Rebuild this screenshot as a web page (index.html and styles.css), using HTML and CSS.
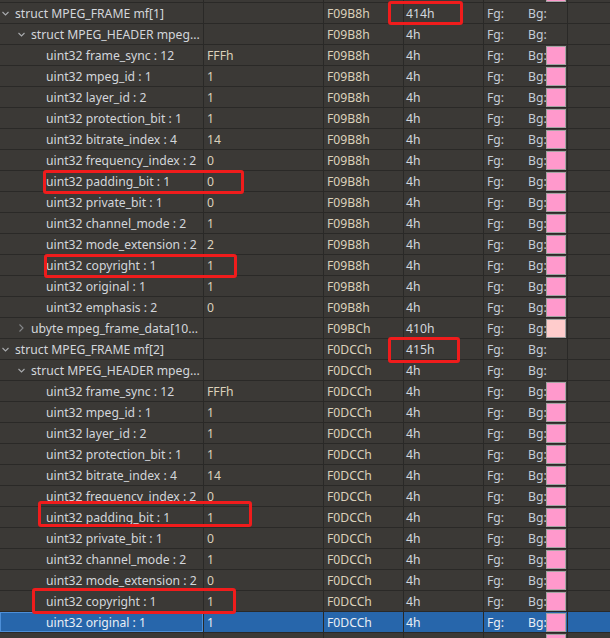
FILE: index.html
```html
<!DOCTYPE html>
<html>
<head>
<meta charset="utf-8">
<link rel="stylesheet" href="styles.css">
</head>
<body>
<div class="view">
  <div class="table">
    <div class="r"><div class="c n l2"><span class="tw"></span></div><div class="c v"></div><div class="c s"></div><div class="c z"></div><div class="c col"><span class="fg"></span><span class="bg"></span><span class="sw pk"></span></div><div class="c e"></div></div>

    <div class="r"><div class="c n l0"><span class="tw"><svg width="9" height="20" viewBox="0 0 9 20"><polyline points="1.5,9 4.5,12 7.5,9" /></svg></span>struct MPEG_FRAME mf[1]</div><div class="c v"></div><div class="c s">F09B8h</div><div class="c z">414h</div><div class="c col"><span class="fg">Fg:</span><span class="bg">Bg:</span></div><div class="c e"></div></div>
    <div class="r"><div class="c n l1"><span class="tw"><svg width="9" height="20" viewBox="0 0 9 20"><polyline points="1.5,9 4.5,12 7.5,9" /></svg></span>struct MPEG_HEADER mpeg...</div><div class="c v"></div><div class="c s">F09B8h</div><div class="c z">4h</div><div class="c col"><span class="fg">Fg:</span><span class="bg">Bg:</span></div><div class="c e"></div></div>
    <div class="r"><div class="c n l2"><span class="tw"></span>uint32 frame_sync : 12</div><div class="c v">FFFh</div><div class="c s">F09B8h</div><div class="c z">4h</div><div class="c col"><span class="fg">Fg:</span><span class="bg">Bg:</span><span class="sw pk"></span></div><div class="c e"></div></div>
    <div class="r"><div class="c n l2"><span class="tw"></span>uint32 mpeg_id : 1</div><div class="c v">1</div><div class="c s">F09B8h</div><div class="c z">4h</div><div class="c col"><span class="fg">Fg:</span><span class="bg">Bg:</span><span class="sw pk"></span></div><div class="c e"></div></div>
    <div class="r"><div class="c n l2"><span class="tw"></span>uint32 layer_id : 2</div><div class="c v">1</div><div class="c s">F09B8h</div><div class="c z">4h</div><div class="c col"><span class="fg">Fg:</span><span class="bg">Bg:</span><span class="sw pk"></span></div><div class="c e"></div></div>
    <div class="r"><div class="c n l2"><span class="tw"></span>uint32 protection_bit : 1</div><div class="c v">1</div><div class="c s">F09B8h</div><div class="c z">4h</div><div class="c col"><span class="fg">Fg:</span><span class="bg">Bg:</span><span class="sw pk"></span></div><div class="c e"></div></div>
    <div class="r"><div class="c n l2"><span class="tw"></span>uint32 bitrate_index : 4</div><div class="c v">14</div><div class="c s">F09B8h</div><div class="c z">4h</div><div class="c col"><span class="fg">Fg:</span><span class="bg">Bg:</span><span class="sw pk"></span></div><div class="c e"></div></div>
    <div class="r"><div class="c n l2"><span class="tw"></span>uint32 frequency_index : 2</div><div class="c v">0</div><div class="c s">F09B8h</div><div class="c z">4h</div><div class="c col"><span class="fg">Fg:</span><span class="bg">Bg:</span><span class="sw pk"></span></div><div class="c e"></div></div>
    <div class="r"><div class="c n l2"><span class="tw"></span>uint32 padding_bit : 1</div><div class="c v">0</div><div class="c s">F09B8h</div><div class="c z">4h</div><div class="c col"><span class="fg">Fg:</span><span class="bg">Bg:</span><span class="sw pk"></span></div><div class="c e"></div></div>
    <div class="r"><div class="c n l2"><span class="tw"></span>uint32 private_bit : 1</div><div class="c v">0</div><div class="c s">F09B8h</div><div class="c z">4h</div><div class="c col"><span class="fg">Fg:</span><span class="bg">Bg:</span><span class="sw pk"></span></div><div class="c e"></div></div>
    <div class="r"><div class="c n l2"><span class="tw"></span>uint32 channel_mode : 2</div><div class="c v">1</div><div class="c s">F09B8h</div><div class="c z">4h</div><div class="c col"><span class="fg">Fg:</span><span class="bg">Bg:</span><span class="sw pk"></span></div><div class="c e"></div></div>
    <div class="r"><div class="c n l2"><span class="tw"></span>uint32 mode_extension : 2</div><div class="c v">2</div><div class="c s">F09B8h</div><div class="c z">4h</div><div class="c col"><span class="fg">Fg:</span><span class="bg">Bg:</span><span class="sw pk"></span></div><div class="c e"></div></div>
    <div class="r"><div class="c n l2"><span class="tw"></span>uint32 copyright : 1</div><div class="c v">1</div><div class="c s">F09B8h</div><div class="c z">4h</div><div class="c col"><span class="fg">Fg:</span><span class="bg">Bg:</span><span class="sw pk"></span></div><div class="c e"></div></div>
    <div class="r"><div class="c n l2"><span class="tw"></span>uint32 original : 1</div><div class="c v">1</div><div class="c s">F09B8h</div><div class="c z">4h</div><div class="c col"><span class="fg">Fg:</span><span class="bg">Bg:</span><span class="sw pk"></span></div><div class="c e"></div></div>
    <div class="r"><div class="c n l2"><span class="tw"></span>uint32 emphasis : 2</div><div class="c v">0</div><div class="c s">F09B8h</div><div class="c z">4h</div><div class="c col"><span class="fg">Fg:</span><span class="bg">Bg:</span><span class="sw pk"></span></div><div class="c e"></div></div>
    <div class="r"><div class="c n l1"><span class="tw"><svg width="9" height="20" viewBox="0 0 9 20"><polyline class="dim" points="2.5,6.5 6,10 2.5,13.5" /></svg></span>ubyte mpeg_frame_data[10...</div><div class="c v"></div><div class="c s">F09BCh</div><div class="c z">410h</div><div class="c col"><span class="fg">Fg:</span><span class="bg">Bg:</span><span class="sw lt"></span></div><div class="c e"></div></div>

    <div class="r"><div class="c n l0"><span class="tw"><svg width="9" height="20" viewBox="0 0 9 20"><polyline points="1.5,9 4.5,12 7.5,9" /></svg></span>struct MPEG_FRAME mf[2]</div><div class="c v"></div><div class="c s">F0DCCh</div><div class="c z">415h</div><div class="c col"><span class="fg">Fg:</span><span class="bg">Bg:</span></div><div class="c e"></div></div>
    <div class="r"><div class="c n l1"><span class="tw"><svg width="9" height="20" viewBox="0 0 9 20"><polyline points="1.5,9 4.5,12 7.5,9" /></svg></span>struct MPEG_HEADER mpeg...</div><div class="c v"></div><div class="c s">F0DCCh</div><div class="c z">4h</div><div class="c col"><span class="fg">Fg:</span><span class="bg">Bg:</span></div><div class="c e"></div></div>
    <div class="r"><div class="c n l2"><span class="tw"></span>uint32 frame_sync : 12</div><div class="c v">FFFh</div><div class="c s">F0DCCh</div><div class="c z">4h</div><div class="c col"><span class="fg">Fg:</span><span class="bg">Bg:</span><span class="sw pk"></span></div><div class="c e"></div></div>
    <div class="r"><div class="c n l2"><span class="tw"></span>uint32 mpeg_id : 1</div><div class="c v">1</div><div class="c s">F0DCCh</div><div class="c z">4h</div><div class="c col"><span class="fg">Fg:</span><span class="bg">Bg:</span><span class="sw pk"></span></div><div class="c e"></div></div>
    <div class="r"><div class="c n l2"><span class="tw"></span>uint32 layer_id : 2</div><div class="c v">1</div><div class="c s">F0DCCh</div><div class="c z">4h</div><div class="c col"><span class="fg">Fg:</span><span class="bg">Bg:</span><span class="sw pk"></span></div><div class="c e"></div></div>
    <div class="r"><div class="c n l2"><span class="tw"></span>uint32 protection_bit : 1</div><div class="c v">1</div><div class="c s">F0DCCh</div><div class="c z">4h</div><div class="c col"><span class="fg">Fg:</span><span class="bg">Bg:</span><span class="sw pk"></span></div><div class="c e"></div></div>
    <div class="r"><div class="c n l2"><span class="tw"></span>uint32 bitrate_index : 4</div><div class="c v">14</div><div class="c s">F0DCCh</div><div class="c z">4h</div><div class="c col"><span class="fg">Fg:</span><span class="bg">Bg:</span><span class="sw pk"></span></div><div class="c e"></div></div>
    <div class="r"><div class="c n l2"><span class="tw"></span>uint32 frequency_index : 2</div><div class="c v">0</div><div class="c s">F0DCCh</div><div class="c z">4h</div><div class="c col"><span class="fg">Fg:</span><span class="bg">Bg:</span><span class="sw pk"></span></div><div class="c e"></div></div>
    <div class="r"><div class="c n l2"><span class="tw"></span>uint32 padding_bit : 1</div><div class="c v">1</div><div class="c s">F0DCCh</div><div class="c z">4h</div><div class="c col"><span class="fg">Fg:</span><span class="bg">Bg:</span><span class="sw pk"></span></div><div class="c e"></div></div>
    <div class="r"><div class="c n l2"><span class="tw"></span>uint32 private_bit : 1</div><div class="c v">0</div><div class="c s">F0DCCh</div><div class="c z">4h</div><div class="c col"><span class="fg">Fg:</span><span class="bg">Bg:</span><span class="sw pk"></span></div><div class="c e"></div></div>
    <div class="r"><div class="c n l2"><span class="tw"></span>uint32 channel_mode : 2</div><div class="c v">1</div><div class="c s">F0DCCh</div><div class="c z">4h</div><div class="c col"><span class="fg">Fg:</span><span class="bg">Bg:</span><span class="sw pk"></span></div><div class="c e"></div></div>
    <div class="r"><div class="c n l2"><span class="tw"></span>uint32 mode_extension : 2</div><div class="c v">0</div><div class="c s">F0DCCh</div><div class="c z">4h</div><div class="c col"><span class="fg">Fg:</span><span class="bg">Bg:</span><span class="sw pk"></span></div><div class="c e"></div></div>
    <div class="r"><div class="c n l2"><span class="tw"></span>uint32 copyright : 1</div><div class="c v">1</div><div class="c s">F0DCCh</div><div class="c z">4h</div><div class="c col"><span class="fg">Fg:</span><span class="bg">Bg:</span><span class="sw pk"></span></div><div class="c e"></div></div>
    <div class="r sel"><div class="c n l2"><span class="tw"></span>uint32 original : 1</div><div class="c v">1</div><div class="c s">F0DCCh</div><div class="c z">4h</div><div class="c col"><span class="fg">Fg:</span><span class="bg">Bg:</span><span class="sw pk"></span></div><div class="c e"></div></div>
    <div class="r"><div class="c n l2"><span class="tw"></span></div><div class="c v"></div><div class="c s"></div><div class="c z"></div><div class="c col"><span class="fg"></span><span class="bg"></span><span class="sw pk"></span></div><div class="c e"></div></div>
  </div>

  <div class="mark m1"></div>
  <div class="mark m2"></div>
  <div class="mark m3"></div>
  <div class="mark m4"></div>
  <div class="mark m5"></div>
  <div class="mark m6"></div>
</div>
</body>
</html>
```

FILE: styles.css
```css
html, body {
  margin: 0;
  padding: 0;
  background: #3b3936;
}

.view {
  position: relative;
  width: 610px;
  height: 638px;
  overflow: hidden;
  background: #3b3936;
  font-family: "Noto Sans", "Open Sans", sans-serif;
  font-size: 12.2px;
  color: #d3d6db;
}

.table {
  margin-top: -18px;
}

.r {
  display: grid;
  grid-template-columns: 204px 120px 80px 80px 84px 1fr;
  height: 21px;
}

.c {
  box-sizing: border-box;
  height: 21px;
  border-bottom: 1px solid #2a2927;
  border-right: 1px solid #2a2927;
  padding-top: 1px;
  line-height: 19px;
  white-space: nowrap;
  overflow: hidden;
}

.n {
  display: flex;
  align-items: flex-start;
  padding-top: 0;
  line-height: 21px;
}
.n .tw {
  flex: 0 0 15px;
  width: 15px;
  height: 20px;
}
.n .tw svg {
  display: block;
  margin-left: 1px;
}
.n .tw polyline {
  fill: none;
  stroke: #a9abae;
  stroke-width: 1.1;
}
.n .tw polyline.dim {
  stroke: #85878a;
}
.l0 { padding-left: 0; }
.l1 { padding-left: 16px; }
.l2 { padding-left: 31px; }

.v, .s {
  padding-left: 3px;
  color: #dbd1bb;
}
.z {
  padding-left: 2px;
  color: #d3d7de;
}

.col {
  display: flex;
  align-items: flex-start;
  padding-left: 3px;
  color: #c6cdd8;
}
.fg { width: 41px; flex: 0 0 41px; }
.bg { width: 18px; flex: 0 0 18px; }
.sw {
  box-sizing: border-box;
  width: 20px;
  height: 19px;
  border: 1px solid #a3a3a3;
}
.sw.pk { background: #ff99cc; }
.sw.lt { background: #ffcccc; }

.e {
  border-right: none;
}

.sel .c {
  background: #2766ab;
  color: #e9eef5;
}
.sel .n {
  box-shadow: inset 0 0 0 1px #4d8fd8;
}

.mark {
  position: absolute;
  box-sizing: border-box;
  border: 3px solid #f01c1c;
  border-radius: 3px;
}
.m1 { left: 388px; top: 1px;   width: 75px;  height: 24px; }
.m2 { left: 43px;  top: 170px; width: 201px; height: 24px; }
.m3 { left: 44px;  top: 254px; width: 193px; height: 24px; }
.m4 { left: 388px; top: 337px; width: 72px;  height: 26px; }
.m5 { left: 38px;  top: 501px; width: 214px; height: 26px; }
.m6 { left: 32px;  top: 588px; width: 204px; height: 26px; }
```
